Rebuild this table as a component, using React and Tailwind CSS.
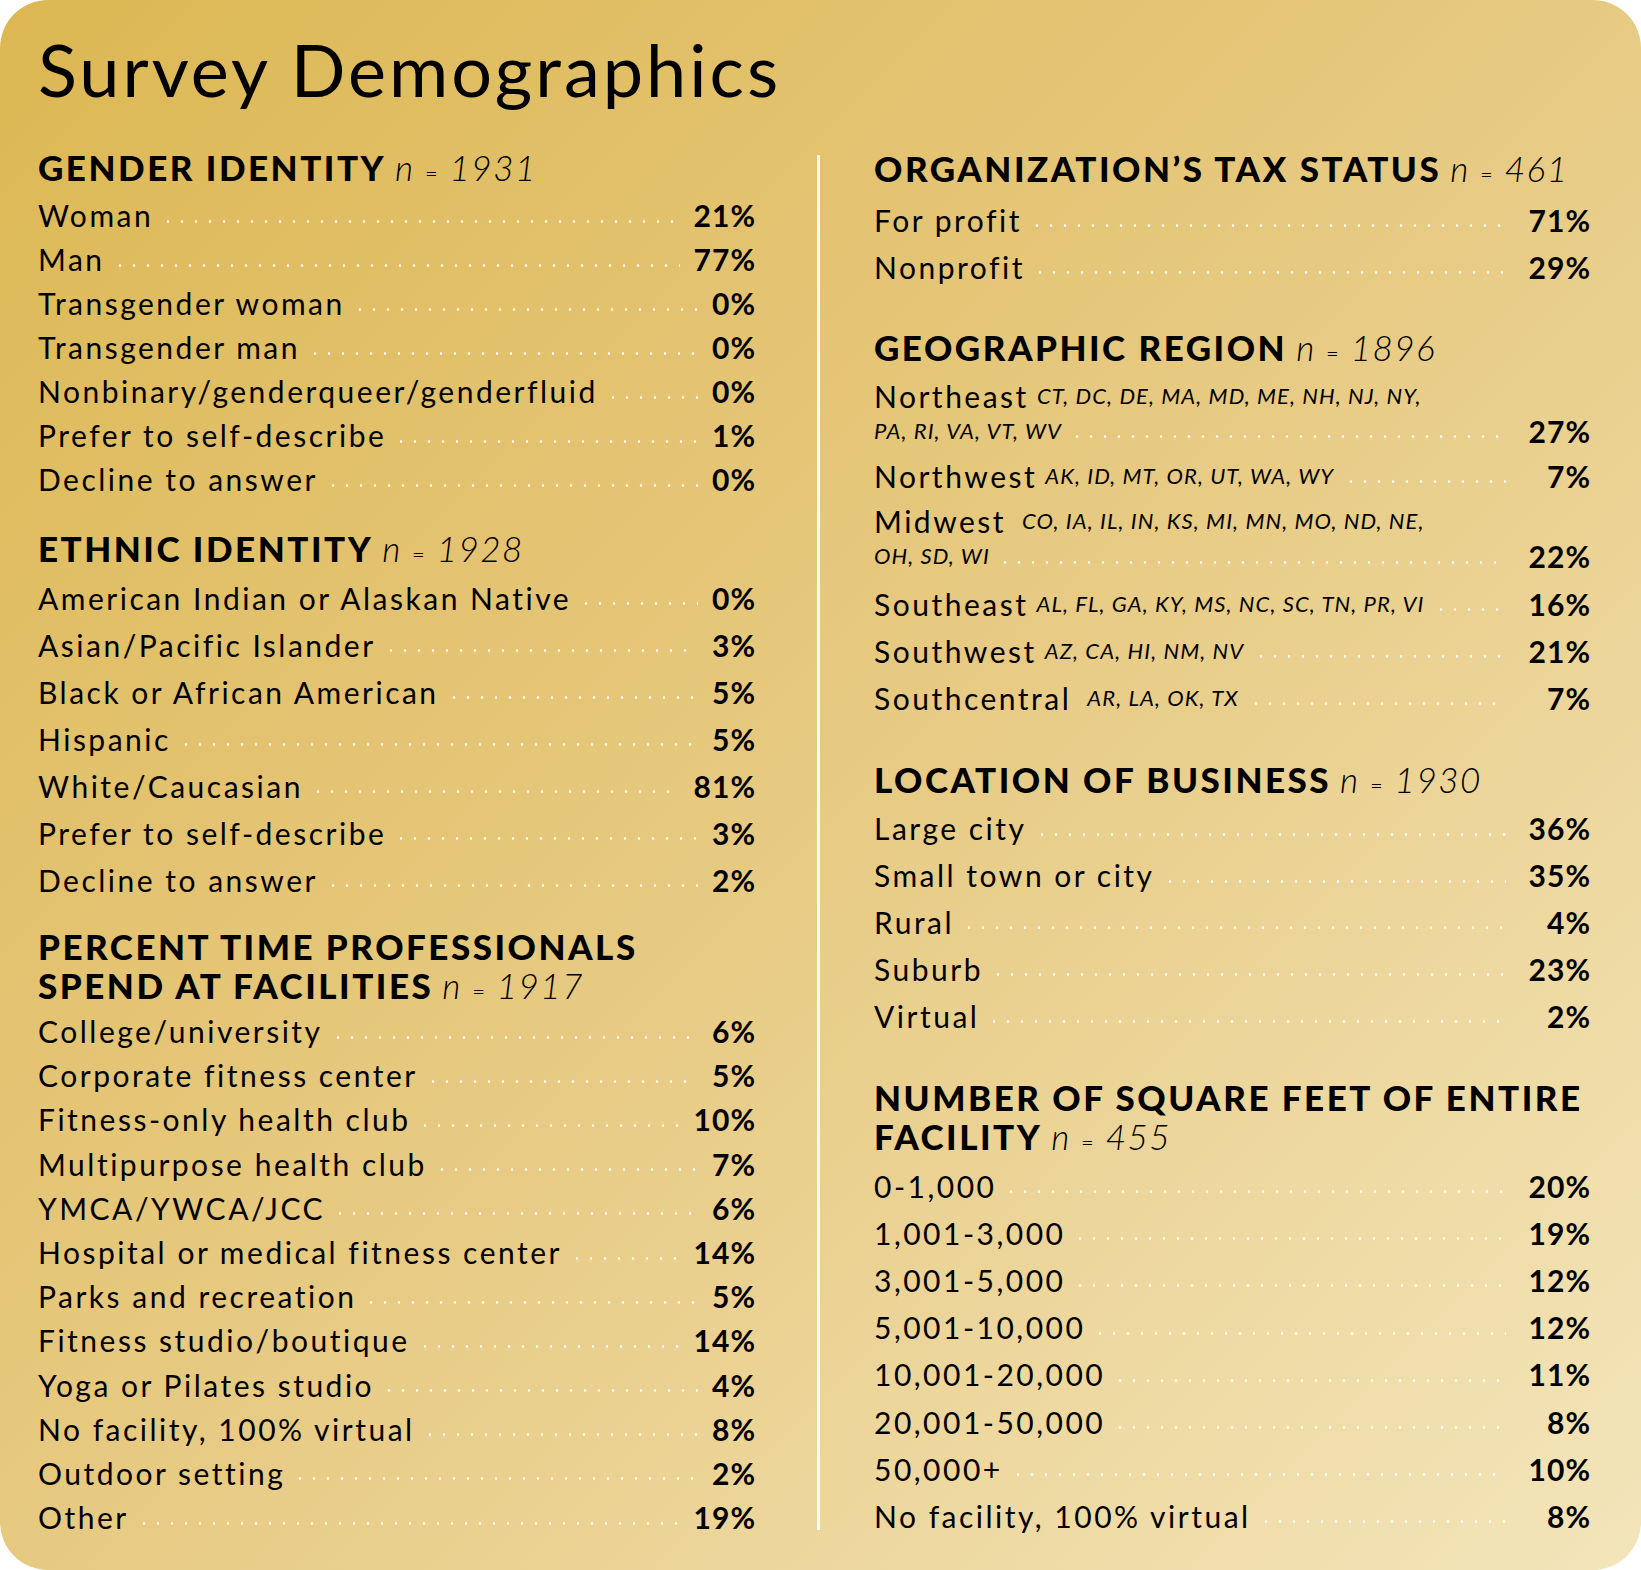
import React from "react";

// dotted leader between the label and the value
const Leader = ({ className = "" }) => (
  <span
    className={
      "flex-1 h-[3px] mt-[12px] bg-[radial-gradient(circle,rgba(255,255,255,0.85)_1px,transparent_1.6px)] bg-[length:14px_3px] bg-repeat-x " +
      className
    }
  />
);

const Row = ({ label, value, h, right = false }) => (
  <div className={"flex items-center " + h}>
    <span className="text-[30px] leading-none tracking-[2.5px] whitespace-nowrap">{label}</span>
    <Leader className={right ? "ml-[8px]" : "ml-[8px] mr-[14px]"} />
    <Value className={right ? "w-[85px]" : ""}>{value}</Value>
  </div>
);

const Value = ({ children, className = "" }) => (
  <span className={"text-[30px] font-bold leading-none tracking-[1px] text-right " + className}>{children}</span>
);

const Heading = ({ children, n }) => (
  <span className="whitespace-nowrap">
    <span className="font-black tracking-[2.5px]">{children}</span>{" "}
    <span className="italic font-light tracking-[1.5px]">
      n <span className="text-[22px] not-italic">=</span> {n}
    </span>
  </span>
);

const gender = [
  ["Woman", "21%"],
  ["Man", "77%"],
  ["Transgender woman", "0%"],
  ["Transgender man", "0%"],
  ["Nonbinary/genderqueer/genderfluid", "0%"],
  ["Prefer to self-describe", "1%"],
  ["Decline to answer", "0%"],
];

const ethnic = [
  ["American Indian or Alaskan Native", "0%"],
  ["Asian/Pacific Islander", "3%"],
  ["Black or African American", "5%"],
  ["Hispanic", "5%"],
  ["White/Caucasian", "81%"],
  ["Prefer to self-describe", "3%"],
  ["Decline to answer", "2%"],
];

const facilities = [
  ["College/university", "6%"],
  ["Corporate fitness center", "5%"],
  ["Fitness-only health club", "10%"],
  ["Multipurpose health club", "7%"],
  ["YMCA/YWCA/JCC", "6%"],
  ["Hospital or medical fitness center", "14%"],
  ["Parks and recreation", "5%"],
  ["Fitness studio/boutique", "14%"],
  ["Yoga or Pilates studio", "4%"],
  ["No facility, 100% virtual", "8%"],
  ["Outdoor setting", "2%"],
  ["Other", "19%"],
];

const tax = [
  ["For profit", "71%"],
  ["Nonprofit", "29%"],
];

const location = [
  ["Large city", "36%"],
  ["Small town or city", "35%"],
  ["Rural", "4%"],
  ["Suburb", "23%"],
  ["Virtual", "2%"],
];

const sqft = [
  ["0-1,000", "20%"],
  ["1,001-3,000", "19%"],
  ["3,001-5,000", "12%"],
  ["5,001-10,000", "12%"],
  ["10,001-20,000", "11%"],
  ["20,001-50,000", "8%"],
  ["50,000+", "10%"],
  ["No facility, 100% virtual", "8%"],
];

const States = ({ children, className = "" }) => (
  <span className={"italic text-[22px] leading-none tracking-[1.1px] " + className}>{children}</span>
);

const Label = ({ children }) => (
  <span className="text-[30px] leading-none tracking-[2.5px] whitespace-nowrap">{children}</span>
);

const RegionRow = ({ label, states, value, gap = "ml-[8px]" }) => (
  <div className="flex items-center h-[47px]">
    <Label>{label}</Label>
    <States className={gap + " whitespace-nowrap"}>{states}</States>
    <Leader className="ml-[10px]" />
    <Value className="w-[85px]">{value}</Value>
  </div>
);

export default function App() {
  return (
    <div className="w-[1641px] h-[1570px] bg-white font-['Lato','Liberation_Sans',sans-serif] text-black">
      <div className="h-full rounded-[48px] bg-[linear-gradient(135deg,#dcb752_0%,#e7ca82_50%,#f3e5bb_100%)] pl-[38px] pt-[29px]">
        <h1 className="text-[72px] leading-[80px] h-[117px] tracking-[3px]">Survey Demographics</h1>

        <div className="flex">
          {/* left column */}
          <div className="w-[718px] flex flex-col">
            <div className="h-[47px] text-[35px] leading-[40px] flex items-center">
              <Heading n="1931">GENDER IDENTITY</Heading>
            </div>
            {gender.map(([l, v]) => (
              <Row key={l} label={l} value={v} h="h-[44px]" />
            ))}

            <div className="mt-[27px] h-[46px] text-[35px] leading-[40px]">
              <Heading n="1928">ETHNIC IDENTITY</Heading>
            </div>
            {ethnic.map(([l, v]) => (
              <Row key={l} label={l} value={v} h="h-[47px]" />
            ))}

            <div className="mt-[24px] h-[82px] text-[35px] leading-[39px]">
              <span className="font-black tracking-[2.5px] whitespace-nowrap">PERCENT TIME PROFESSIONALS</span>
              <br />
              <Heading n="1917">SPEND AT FACILITIES</Heading>
            </div>
            {facilities.map(([l, v]) => (
              <Row key={l} label={l} value={v} h="h-[44.2px]" />
            ))}
          </div>

          {/* divider */}
          <div className="ml-[61px] mt-[9px] w-[3px] h-[1375px] bg-white/90" />

          {/* right column */}
          <div className="ml-[54px] w-[717px] flex flex-col">
            <div className="h-[50px] text-[35px] leading-[40px] flex items-center">
              <Heading n="461">ORGANIZATION’S TAX STATUS</Heading>
            </div>
            {tax.map(([l, v]) => (
              <Row key={l} label={l} value={v} h="h-[47px]" right />
            ))}

            <div className="mt-[37px] h-[47px] text-[35px] leading-[40px]">
              <Heading n="1896">GEOGRAPHIC REGION</Heading>
            </div>

            <div className="h-[78px] flex flex-col">
              <div className="h-[44px] flex items-center">
                <Label>Northeast</Label>
                <States className="ml-[8px]">CT, DC, DE, MA, MD, ME, NH, NJ, NY,</States>
              </div>
              <div className="h-[25px] flex items-center">
                <States>PA, RI, VA, VT, WV</States>
                <Leader className="ml-[8px]" />
                <Value className="w-[85px]">27%</Value>
              </div>
            </div>
            <RegionRow label="Northwest" states="AK, ID, MT, OR, UT, WA, WY" value="7%" />
            <div className="h-[81px] flex flex-col">
              <div className="h-[44px] flex items-center">
                <Label>Midwest</Label>
                <States className="ml-[16px]">CO, IA, IL, IN, KS, MI, MN, MO, ND, NE,</States>
              </div>
              <div className="h-[26px] flex items-center">
                <States>OH, SD, WI</States>
                <Leader className="ml-[8px]" />
                <Value className="w-[85px]">22%</Value>
              </div>
            </div>
            <RegionRow label="Southeast" states="AL, FL, GA, KY, MS, NC, SC, TN, PR, VI" value="16%" />
            <RegionRow label="Southwest" states="AZ, CA, HI, NM, NV" value="21%" />
            <RegionRow label="Southcentral" states="AR, LA, OK, TX" value="7%" gap="ml-[16px]" />

            <div className="mt-[38px] h-[46px] text-[35px] leading-[40px]">
              <Heading n="1930">LOCATION OF BUSINESS</Heading>
            </div>
            {location.map(([l, v]) => (
              <Row key={l} label={l} value={v} h="h-[46.8px]" right />
            ))}

            <div className="mt-[39px] h-[84px] text-[35px] leading-[39px]">
              <span className="font-black tracking-[2.5px] whitespace-nowrap">NUMBER OF SQUARE FEET OF ENTIRE</span>
              <br />
              <Heading n="455">FACILITY</Heading>
            </div>
            {sqft.map(([l, v]) => (
              <Row key={l} label={l} value={v} h="h-[47.2px]" right />
            ))}
          </div>
        </div>
      </div>
    </div>
  );
}
